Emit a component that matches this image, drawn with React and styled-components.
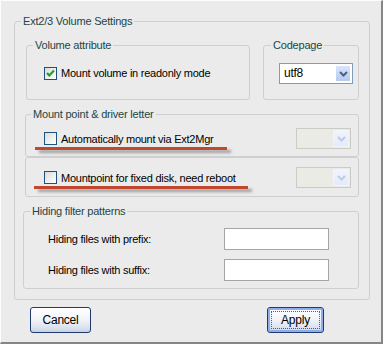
import styled, { createGlobalStyle } from "styled-components";

const GlobalStyle = createGlobalStyle`
  html, body {
    margin: 0;
    padding: 0;
    background: #ebebeb;
  }
  * {
    box-sizing: border-box;
  }
`;

export default function App() {
  return (
    <>
      <GlobalStyle />
      <Window>
        <OuterGroup>
          <Legend $shift={-5}>Ext2/3 Volume Settings</Legend>
          <TopRow>
            <Group $width={224} $pad="14px 8px 17px 17px">
              <Legend $shift={-11}>Volume attribute</Legend>
              <CheckRow>
                <Checkbox checked />
                <span>Mount volume in readonly mode</span>
              </CheckRow>
            </Group>
            <Group $width={96} $pad="11px 6px 15px 15px">
              <Legend $shift={-8}>Codepage</Legend>
              <Combo $width={74}>
                <ComboText>utf8</ComboText>
                <ComboButton>
                  <Chevron />
                </ComboButton>
              </Combo>
            </Group>
          </TopRow>

          <Group $left={-1} $top={7} $width={334} $pad="7px 7px 7px 18px" $flat>
            <Legend $shift={-13}>Mount point &amp; driver letter</Legend>
            <MountRow>
              <CheckRow>
                <Checkbox />
                <span>Automatically mount via Ext2Mgr</span>
                <Marker $width={192} />
              </CheckRow>
              <Combo $width={55} $disabled>
                <ComboButton $disabled>
                  <Chevron $disabled />
                </ComboButton>
              </Combo>
            </MountRow>
          </Group>
          <Box $left={-1} $width={334}>
            <MountRow>
              <CheckRow>
                <Checkbox />
                <span>Mountpoint for fixed disk, need reboot</span>
                <Marker $width={214} $offset={-10} />
              </CheckRow>
              <Combo $width={55} $disabled>
                <ComboButton $disabled>
                  <Chevron $disabled />
                </ComboButton>
              </Combo>
            </MountRow>
          </Box>

          <Group $left={-3} $top={7} $width={336} $pad="10px 7px 7px 24px">
            <Legend $shift={-18}>Hiding filter patterns</Legend>
            <FilterGrid>
              <FieldLabel>Hiding files with prefix:</FieldLabel>
              <TextInput />
              <FieldLabel>Hiding files with suffix:</FieldLabel>
              <TextInput />
            </FilterGrid>
          </Group>
        </OuterGroup>

        <ButtonBar>
          <Button $width={61}>Cancel</Button>
          <Button $width={57} $default>
            <FocusRect>Apply</FocusRect>
          </Button>
        </ButtonBar>
      </Window>
    </>
  );
}

function Checkbox({ checked }) {
  return (
    <CheckBoxFrame>
      {checked && (
        <svg width="11" height="11" viewBox="0 0 11 11">
          <path d="M2 5 L4.3 7.5 L9 2.5" fill="none" stroke="#21a121" strokeWidth="2.2" />
        </svg>
      )}
    </CheckBoxFrame>
  );
}

function Chevron({ $disabled }) {
  return (
    <svg width="9" height="6" viewBox="0 0 9 6">
      <path
        d="M1 1 L4.5 4.5 L8 1"
        fill="none"
        stroke={$disabled ? "#bfcbe3" : "#4d6185"}
        strokeWidth="2"
      />
    </svg>
  );
}

const Window = styled.div`
  width: 383px;
  height: 344px;
  background: #ebebeb;
  border-top: 1px solid #fdfdfd;
  border-left: 1px solid #fdfdfd;
  border-right: 2px solid #868686;
  border-bottom: 2px solid #868686;
  padding: 13px 11px 0 13px;
  font-family: "Liberation Sans", Arial, sans-serif;
  font-size: 11px;
  letter-spacing: -0.25px;
  color: #000;
`;

const OuterGroup = styled.fieldset`
  margin: 0;
  width: 356px;
  height: 286px;
  padding: 10px 10px 11px 11px;
  border: 1px solid #cfcfcf;
  border-radius: 3px;
  min-width: 0;
`;

const Legend = styled.legend`
  padding: 0 2px;
  margin-left: ${(p) => p.$shift || 0}px;
  line-height: 14px;
  height: 14px;
  color: #234545;
  letter-spacing: -0.2px;
`;

const TopRow = styled.div`
  display: flex;
  gap: 13px;
`;

const Group = styled.fieldset`
  margin: ${(p) => p.$top || 0}px 0 0 ${(p) => p.$left || 0}px;
  width: ${(p) => p.$width}px;
  padding: ${(p) => p.$pad};
  border: 1px solid #cfcfcf;
  border-radius: 3px;
  min-width: 0;
  height: ${(p) => (p.$flat ? "50px" : "auto")};
`;

const Box = styled.div`
  margin-left: ${(p) => p.$left || 0}px;
  width: ${(p) => p.$width}px;
  height: 40px;
  padding: 9px 7px 8px 18px;
  border: 1px solid #cfcfcf;
  border-radius: 3px;
`;

const MountRow = styled.div`
  display: flex;
  align-items: center;
  justify-content: space-between;
  height: 21px;
`;

const CheckRow = styled.label`
  position: relative;
  display: flex;
  align-items: center;
  gap: 4px;
  height: 14px;
  white-space: nowrap;
`;

const CheckBoxFrame = styled.span`
  display: flex;
  align-items: center;
  justify-content: center;
  width: 13px;
  height: 13px;
  border: 1px solid #1c5180;
  background: linear-gradient(135deg, #dcdcd7 0%, #f1f1ee 60%, #ffffff 100%);
  flex: none;
`;

const Marker = styled.span`
  position: absolute;
  left: ${(p) => p.$offset || -9}px;
  top: 15px;
  width: ${(p) => p.$width}px;
  height: 3px;
  background: #c2472f;
  box-shadow: 4px 3px 3px rgba(60, 60, 60, 0.45);
`;

const Combo = styled.div`
  display: flex;
  width: ${(p) => p.$width}px;
  height: 21px;
  border: 1px solid ${(p) => (p.$disabled ? "#cbcbc4" : "#7f9db9")};
  background: ${(p) => (p.$disabled ? "#ebebe6" : "#ffffff")};
  padding: 1px;
`;

const ComboText = styled.span`
  flex: 1;
  padding-left: 3px;
  line-height: 17px;
  font-size: 12px;
`;

const ComboButton = styled.span`
  margin-left: auto;
  width: 16px;
  height: 17px;
  display: flex;
  align-items: center;
  justify-content: center;
  border: 1px solid ${(p) => (p.$disabled ? "#f0f4fc" : "#ffffff")};
  border-radius: 1px;
  background: ${(p) =>
    p.$disabled
      ? "linear-gradient(180deg, #f0f4fd, #e3eafa)"
      : "linear-gradient(180deg, #d8e4fb, #b6caf0)"};
`;

const FilterGrid = styled.div`
  display: grid;
  grid-template-columns: 176px 105px;
  grid-auto-rows: 22px;
  row-gap: 9px;
  align-items: center;
`;

const FieldLabel = styled.span`
  white-space: nowrap;
`;

const TextInput = styled.div`
  height: 22px;
  border: 1px solid #a5a5a5;
  background: #ffffff;
`;

const ButtonBar = styled.div`
  display: flex;
  justify-content: space-between;
  padding: 7px 46px 0 16px;
`;

const Button = styled.div`
  width: ${(p) => p.$width}px;
  height: 26px;
  display: flex;
  align-items: center;
  justify-content: center;
  border: 1px solid #1f3b6b;
  border-radius: 3px;
  background: linear-gradient(180deg, #ffffff 0%, #f3f5fa 45%, #dde3ee 80%, #c8d2e4 100%);
  box-shadow: ${(p) => (p.$default ? "inset 0 0 0 2px #8eaef0" : "none")};
  font-size: 12px;
`;

const FocusRect = styled.span`
  display: flex;
  align-items: center;
  justify-content: center;
  width: calc(100% - 6px);
  height: calc(100% - 6px);
  border: 1px dotted #6a5a4a;
`;
